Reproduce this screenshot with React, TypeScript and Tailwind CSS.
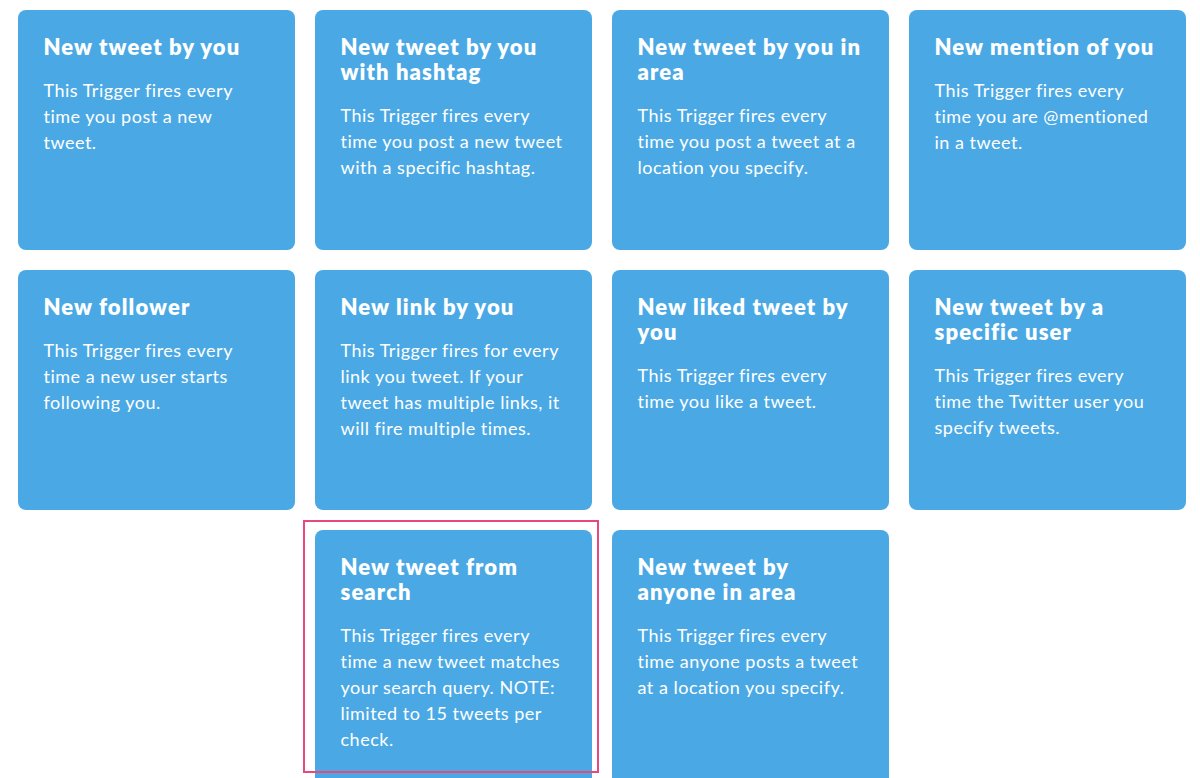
const cards: { title: string[]; desc: string[] }[] = [
  { title: ["New tweet by you"], desc: ["This Trigger fires every", "time you post a new", "tweet."] },
  { title: ["New tweet by you", "with hashtag"], desc: ["This Trigger fires every", "time you post a new tweet", "with a specific hashtag."] },
  { title: ["New tweet by you in", "area"], desc: ["This Trigger fires every", "time you post a tweet at a", "location you specify."] },
  { title: ["New mention of you"], desc: ["This Trigger fires every", "time you are @mentioned", "in a tweet."] },
  { title: ["New follower"], desc: ["This Trigger fires every", "time a new user starts", "following you."] },
  { title: ["New link by you"], desc: ["This Trigger fires for every", "link you tweet. If your", "tweet has multiple links, it", "will fire multiple times."] },
  { title: ["New liked tweet by", "you"], desc: ["This Trigger fires every", "time you like a tweet."] },
  { title: ["New tweet by a", "specific user"], desc: ["This Trigger fires every", "time the Twitter user you", "specify tweets."] },
];

const lastRow = [
  { title: ["New tweet from", "search"], desc: ["This Trigger fires every", "time a new tweet matches", "your search query. NOTE:", "limited to 15 tweets per", "check."] },
  { title: ["New tweet by", "anyone in area"], desc: ["This Trigger fires every", "time anyone posts a tweet", "at a location you specify."] },
];

function Card({ title, desc, tall }: { title: string[]; desc: string[]; tall?: boolean }) {
  return (
    <div className={`rounded-lg bg-[#4aa9e5] pl-[26px] pr-[20px] pt-[24px] text-white ${tall ? "h-[260px]" : "h-[240px]"}`}>
      <h3 className="whitespace-nowrap text-[22px] font-extrabold leading-[25px] tracking-[1.1px]">
        {title.map((t, i) => (
          <div key={i}>{t}</div>
        ))}
      </h3>
      <p className="mt-[18px] whitespace-nowrap text-[18px] leading-[26px] tracking-[0.5px]">
        {desc.map((d, i) => (
          <span key={i} className="block">{d}</span>
        ))}
      </p>
    </div>
  );
}

export default function App() {
  return (
    <div className="h-[778px] w-[1200px] overflow-hidden bg-white font-['Lato',sans-serif]">
      <div className="ml-[17.5px] w-[1168px] pt-[10px]">
        <div className="grid grid-cols-4 gap-x-[20px] gap-y-[20px]">
          {cards.map((c, i) => (
            <Card key={i} {...c} />
          ))}
          <div />
          <div className="relative">
            <div className="pointer-events-none absolute -left-[12px] -right-[7px] -top-[10px] h-[253px] border-2 border-[#e8497a]" />
            <Card {...lastRow[0]} tall />
          </div>
          <Card {...lastRow[1]} tall />
        </div>
      </div>
    </div>
  );
}
